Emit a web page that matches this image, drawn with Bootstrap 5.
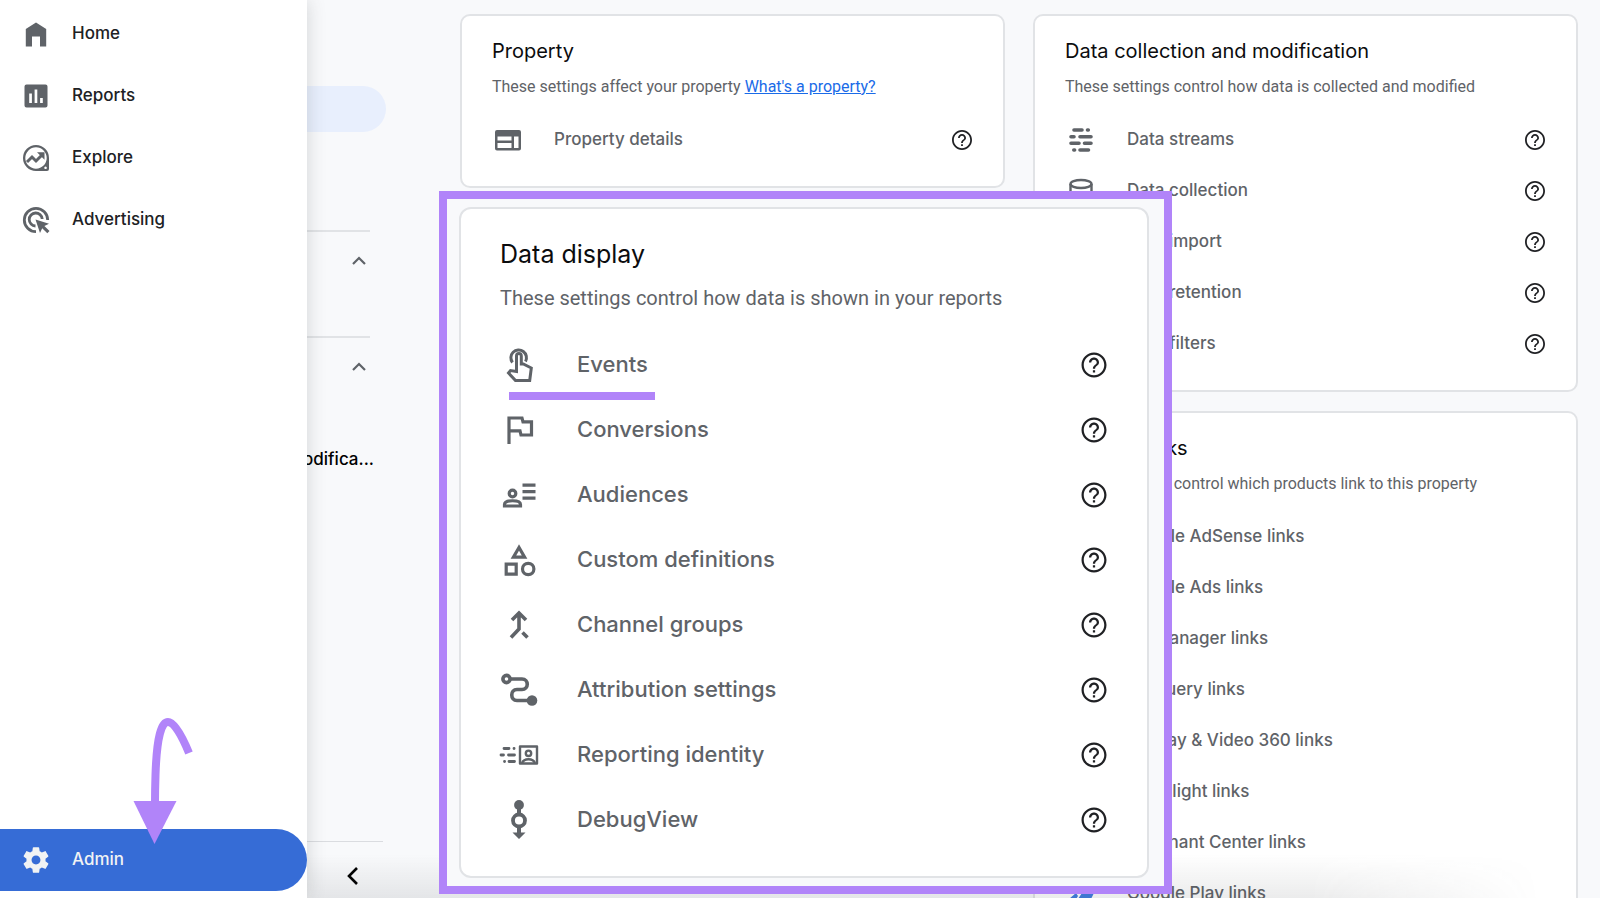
<!DOCTYPE html>
<html lang="en">
<head>
<meta charset="utf-8">
<meta name="viewport" content="width=device-width, initial-scale=1">
<title>Analytics Admin</title>
<link href="https://cdn.jsdelivr.net/npm/bootstrap@5.3.0/dist/css/bootstrap.min.css" rel="stylesheet">
<style>
  :root { --ink: #202124; --muted: #5f6368; --line: #dadce0; --accent: #b184f9; --bg: #f8f9fb; }
  body { font-family: Inter, "Liberation Sans", sans-serif; background: var(--bg); color: var(--ink); font-size: 17px; }
  a { color: inherit; text-decoration: none; }
  svg { display: block; fill: currentColor; flex: none; }
  .shell { height: 100vh; overflow: hidden; }

  .drawer { width: 307px; z-index: 3; padding: 3px 0 7px; box-shadow: 0 0 18px rgba(60,64,67,.2); }
  .drawer-item { height: 62px; padding-left: 22px; gap: 22px; font-weight: 500; font-size: 17px; }
  .drawer-item svg { width: 28px; height: 28px; color: var(--muted); }
  .drawer-item.current { background: #366cd6; color: #f1f3f4; border-radius: 0 31px 31px 0; }
  .drawer-item.current svg { color: #f1f3f4; }
  .pointer { left: 130px; bottom: 50px; z-index: 4; width: 66px; height: 132px; color: var(--accent); }

  .subnav { width: 314px; margin-left: 72px; padding-top: 86px; flex: none; }
  .subnav-pill { height: 46px; margin-bottom: 98px; background: #e8effd; border-radius: 0 23px 23px 0; }
  .subnav-group { border-top: 2px solid #e1e3e6; margin-right: 16px; height: 106px; }
  .subnav-group button, .subnav-foot button { border: 0; background: none; padding: 0; color: var(--muted); }
  .subnav-group button { margin: 17px -1px 0 auto; display: block; }
  .subnav-group.last { height: auto; }
  .subnav-link { margin: 68px -4px 0 0; text-align: right; font-weight: 500; color: #000; font-size: 17px; line-height: 24px; white-space: nowrap; }
  .subnav-foot { border-top: 1px solid var(--line); height: 57px; margin-right: 3px; padding: 19px 16px 0 0; }
  .subnav-foot button { color: #000; }

  .board { padding: 14px 22px 0 74px; }
  .board-grid { display: grid; grid-template-columns: 1fr 1fr; gap: 28px; align-items: start; }
  .stack { display: grid; gap: 19px; }
  .panel { background: #fff; border: 2px solid #e1e3e6; border-radius: 10px; padding: 21px 29px 21px 30px; }
  .panel h2 { font-size: 20px; line-height: 28px; font-weight: 400; margin: 0 0 10px; color: #0b0c0e; }
  .panel p { font-family: Roboto, sans-serif; font-size: 16px; line-height: 24px; margin: 0 0 15px; color: var(--muted); white-space: nowrap; }
  .panel p a { color: #1a6be8; text-decoration: underline; }
  .setting { height: 51px; color: var(--muted); font-weight: 500; }
  .setting a { padding-top: 1px; }
  .setting .glyph { width: 32px; display: flex; justify-content: center; margin-right: 30px; }
  .setting .glyph svg { width: 28px; height: 28px; }
  .help { border: 0; background: none; padding: 0; color: var(--ink); margin-left: auto; }
  .help svg { width: 24px; height: 24px; }

  .spotlight { left: 439px; top: 191px; width: 733px; z-index: 2; border: 8px solid var(--accent); background: var(--bg); padding: 8px 15px 8px 12px; }
  .spotlight .panel { padding: 29px 38px 24px 39px; border-radius: 12px; }
  .spotlight h2 { font-size: 25px; line-height: 32px; margin-bottom: 15px; }
  .spotlight p { font-size: 20px; line-height: 26px; margin-bottom: 21px; }
  .spotlight .setting { height: 65px; font-size: 22px; position: relative; }
  .spotlight .setting a { padding-top: 0; }
  .spotlight .setting .glyph { width: 38px; margin-right: 39px; }
  .spotlight .setting .glyph svg { width: 40px; height: 40px; }
  .spotlight .help svg { width: 30px; height: 30px; }
  .marker { position: absolute; left: 9px; bottom: -3px; width: 146px; height: 8px; background: var(--accent); }
  .haze { height: 44px; z-index: 1; left: 100px; right: 60px; pointer-events: none; background: linear-gradient(rgba(60,64,67,0), rgba(60,64,67,.1)); -webkit-mask-image: linear-gradient(90deg, transparent, #000 15%, #000 84%, transparent); mask-image: linear-gradient(90deg, transparent, #000 15%, #000 84%, transparent); }
</style>
</head>
<body>
<svg width="0" height="0" class="position-absolute" aria-hidden="true">
  <symbol id="help" viewBox="0 0 24 24"><path d="M11.100 18h1.800v-1.800h-1.800zM12 2C6.480 2 2 6.480 2 12s4.480 10 10 10 10-4.480 10-10S17.520 2 12 2zm0 18.200c-4.520 0-8.200-3.680-8.200-8.200s3.680-8.200 8.200-8.200 8.200 3.680 8.200 8.200-3.680 8.200-8.200 8.200zM12 6c-2.210 0-4 1.790-4 4h1.800c0-1.210 1-2.200 2.200-2.200s2.200 1 2.200 2.200c0 2-3.100 1.750-3.100 5h1.800c0-2.250 3.100-2.500 3.100-5 0-2.210-1.790-4-4-4z"/></symbol>
  <symbol id="up" viewBox="0 0 24 24"><path d="M6 15 12 9l6 6" fill="none" stroke="currentColor" stroke-width="2.200"/></symbol>
</svg>

<div class="shell d-flex position-relative">
  <nav class="drawer position-absolute top-0 bottom-0 start-0 bg-white d-flex flex-column" aria-label="Main">
    <a href="#" class="drawer-item d-flex align-items-center"><svg viewBox="0 0 28 28"><path d="M14 2.500 3.800 9v17.500H10V16.500h8v10h6.200V9z"/></svg>Home</a>
    <a href="#" class="drawer-item d-flex align-items-center"><svg viewBox="0 0 28 28"><path fill-rule="evenodd" d="M4.500 2.500h19a2 2 0 0 1 2 2v19a2 2 0 0 1-2 2h-19a2 2 0 0 1-2-2v-19a2 2 0 0 1 2-2zM7.200 11.500V21h2.700v-9.500zM12.600 7.500V21h2.700V7.500zM18.100 16v5h2.700v-5z"/></svg>Reports</a>
    <a href="#" class="drawer-item d-flex align-items-center"><svg viewBox="0 0 28 28"><path fill-rule="evenodd" d="M14 1a13 13 0 0 0 0 26h11q2 0 2-2V14A13 13 0 0 0 14 1zm0 2.300a10.700 10.700 0 1 1 0 21.400 10.700 10.700 0 0 1 0-21.400zM23.500 22.500a1.300 1.300 0 1 0 .1 0z"/><path d="m5 18 5-5 4 4 6-6" fill="none" stroke="currentColor" stroke-width="3"/><path d="M15 8.300h7.500v7.400z"/></svg>Explore</a>
    <a href="#" class="drawer-item d-flex align-items-center"><svg viewBox="0 0 28 28"><path d="M14 25.700A11.700 11.700 0 1 1 25.700 14M13.500 20A6.500 6.500 0 1 1 20.200 13" fill="none" stroke="currentColor" stroke-width="2.800"/><path d="m13.500 13.500 13.500 4.300-4.600 2.200 5.100 5.100-2.200 2.200-5.100-5.100-2.200 4.800z"/></svg>Advertising</a>
    <a href="#" class="drawer-item current d-flex align-items-center mt-auto" aria-current="page"><svg viewBox="1 1 22 22"><path d="M19.430 12.980c.04-.32.07-.64.07-.98s-.03-.66-.07-.98l2.110-1.650c.19-.15.24-.42.12-.64l-2-3.460c-.12-.22-.39-.3-.61-.22l-2.490 1c-.52-.4-1.080-.73-1.690-.98l-.38-2.650C14.460 2.180 14.250 2 14 2h-4c-.25 0-.46.18-.49.42l-.38 2.650c-.61.25-1.170.59-1.690.98l-2.490-1c-.23-.09-.49 0-.61.22l-2 3.460c-.13.22-.07.49.12.64l2.110 1.650c-.04.32-.07.65-.07.98s.03.66.07.98l-2.110 1.650c-.19.15-.24.42-.12.64l2 3.460c.12.22.39.3.61.22l2.490-1c.52.4 1.080.73 1.690.98l.38 2.650c.03.24.24.42.49.42h4c.25 0 .46-.18.49-.42l.38-2.650c.61-.25 1.170-.59 1.690-.98l2.490 1c.23.09.49 0 .61-.22l2-3.460c.12-.22.07-.49-.12-.64l-2.110-1.650zM12 15.500c-1.930 0-3.500-1.570-3.500-3.500s1.570-3.500 3.500-3.500 3.500 1.570 3.500 3.500-1.570 3.500-3.500 3.500z"/></svg>Admin</a>
  </nav>
  <svg class="pointer position-absolute" viewBox="130 716 66 132" aria-hidden="true"><path d="M189 753C175 719 158 697 155.500 775Q155 790 155 803" fill="none" stroke="currentColor" stroke-width="8"/><path d="M133.500 801h43L154.500 844z"/></svg>

  <aside class="subnav d-flex flex-column">
    <div class="subnav-pill"></div>
    <div class="subnav-group"><button type="button" aria-label="Collapse group"><svg width="24" height="24"><use href="#up"/></svg></button></div>
    <div class="subnav-group last"><button type="button" aria-label="Collapse group"><svg width="24" height="24"><use href="#up"/></svg></button>
      <a href="#" class="subnav-link d-block">Data collection and modifica...</a></div>
    <div class="subnav-foot mt-auto d-flex justify-content-end align-items-start"><button type="button" aria-label="Collapse menu"><svg width="28" height="28" viewBox="0 0 28 28"><path d="m18 7-8 8 8 8" fill="none" stroke="currentColor" stroke-width="2.600"/></svg></button></div>
  </aside>

  <main class="board flex-grow-1">
    <div class="board-grid">
      <section class="panel">
        <h2>Property</h2>
        <p>These settings affect your property <a href="#">What's a property?</a></p>
        <div class="setting d-flex align-items-center"><span class="glyph"><svg viewBox="0 0 28 28"><path fill-rule="evenodd" d="M3 4h22a2 2 0 0 1 2 2v16.500a2 2 0 0 1-2 2H3a2 2 0 0 1-2-2V6q0-2 2-2zm.5 6.500v4h14v-4zm0 6.500v5h14v-5zm16.500-6.500V22h4.500V10.500z"/></svg></span><a href="#">Property details</a><button type="button" class="help" aria-label="Help"><svg><use href="#help"/></svg></button></div>
      </section>
      <div class="stack">
        <section class="panel">
          <h2>Data collection and modification</h2>
          <p>These settings control how data is collected and modified</p>
          <div class="setting d-flex align-items-center"><span class="glyph"><svg viewBox="0 0 28 28"><path d="M7 4h8M20.500 4h.8M4 10.700h3M13 10.700h11M4 17.300h8M17.500 17.300H24M6.800 24h.8M13 24h8.500" fill="none" stroke="currentColor" stroke-width="3.600" stroke-linecap="round"/></svg></span><a href="#">Data streams</a><button type="button" class="help" aria-label="Help"><svg><use href="#help"/></svg></button></div>
          <div class="setting d-flex align-items-center"><span class="glyph"><svg viewBox="0 0 28 28"><g fill="none" stroke="currentColor" stroke-width="2.400"><ellipse cx="14" cy="7" rx="10.500" ry="4"/><path d="M3.500 7v14c0 5.500 21 5.500 21 0V7M3.500 14c0 5 21 5 21 0"/></g></svg></span><a href="#">Data collection</a><button type="button" class="help" aria-label="Help"><svg><use href="#help"/></svg></button></div>
          <div class="setting d-flex align-items-center"><span class="glyph"></span><a href="#">Data import</a><button type="button" class="help" aria-label="Help"><svg><use href="#help"/></svg></button></div>
          <div class="setting d-flex align-items-center"><span class="glyph"></span><a href="#">Data retention</a><button type="button" class="help" aria-label="Help"><svg><use href="#help"/></svg></button></div>
          <div class="setting d-flex align-items-center"><span class="glyph"></span><a href="#">Data filters</a><button type="button" class="help" aria-label="Help"><svg><use href="#help"/></svg></button></div>
        </section>
        <section class="panel">
          <h2>Product links</h2>
          <p>These settings control which products link to this property</p>
          <div class="setting d-flex align-items-center"><span class="glyph"></span><a href="#">Google AdSense links</a></div>
          <div class="setting d-flex align-items-center"><span class="glyph"></span><a href="#">Google Ads links</a></div>
          <div class="setting d-flex align-items-center"><span class="glyph"></span><a href="#">Ad Manager links</a></div>
          <div class="setting d-flex align-items-center"><span class="glyph"></span><a href="#">BigQuery links</a></div>
          <div class="setting d-flex align-items-center"><span class="glyph"></span><a href="#">Display &amp; Video 360 links</a></div>
          <div class="setting d-flex align-items-center"><span class="glyph"></span><a href="#">Floodlight links</a></div>
          <div class="setting d-flex align-items-center"><span class="glyph"></span><a href="#">Merchant Center links</a></div>
          <div class="setting d-flex align-items-center"><span class="glyph"><svg viewBox="0 0 28 28"><path fill="#3f7de0" d="m2 19 7-6 2 3-5 8zM11 19l4-6h12l-3 6-9 4z"/></svg></span><a href="#">Google Play links</a></div>
        </section>
      </div>
    </div>
  </main>

  <div class="spotlight position-absolute">
    <section class="panel">
      <h2>Data display</h2>
      <p>These settings control how data is shown in your reports</p>
      <div class="setting d-flex align-items-center"><span class="glyph"><svg viewBox="0 0 40 40"><g fill="none" stroke="currentColor" stroke-width="3"><path d="M13.500 17.500A7.800 7.800 0 1 1 26.500 16.500"/><path d="M17.500 26.500V11a2.400 2.400 0 0 1 4.800 0V19h2l8 4-1.600 12.500H16.500L9.500 28l2-2.500z"/></g></svg></span><a href="#">Events</a><button type="button" class="help" aria-label="Help"><svg><use href="#help"/></svg></button><span class="marker"></span></div>
      <div class="setting d-flex align-items-center"><span class="glyph"><svg viewBox="0 0 40 40"><path d="M10 34V8h13l1 3.800h8.500V25H22l-1-4.200H10" fill="none" stroke="currentColor" stroke-width="3.200"/></svg></span><a href="#">Conversions</a><button type="button" class="help" aria-label="Help"><svg><use href="#help"/></svg></button></div>
      <div class="setting d-flex align-items-center"><span class="glyph"><svg viewBox="0 0 40 40"><g fill="none" stroke="currentColor" stroke-width="3.200"><circle cx="13.500" cy="18.500" r="3.300"/><path d="M5.500 31v-1.500c0-5 16-5 16 0V31zM23.500 10.200h13M23.500 16.700h13M23.500 23.200h13"/></g></svg></span><a href="#">Audiences</a><button type="button" class="help" aria-label="Help"><svg><use href="#help"/></svg></button></div>
      <div class="setting d-flex align-items-center"><span class="glyph"><svg viewBox="0 0 40 40"><g fill="none" stroke="currentColor" stroke-width="3.200"><path d="m20 7.500-5.600 9.600h11.200zM7.200 24.200h10v10h-10z"/><circle cx="29.200" cy="29" r="5.700"/></g></svg></span><a href="#">Custom definitions</a><button type="button" class="help" aria-label="Help"><svg><use href="#help"/></svg></button></div>
      <div class="setting d-flex align-items-center"><span class="glyph"><svg viewBox="0 0 40 40"><path d="m12 32.500 8-8.500V8M13 15l7-7 7 7M23.500 27.500l5 5" fill="none" stroke="currentColor" stroke-width="3.600"/></svg></span><a href="#">Channel groups</a><button type="button" class="help" aria-label="Help"><svg><use href="#help"/></svg></button></div>
      <div class="setting d-flex align-items-center"><span class="glyph"><svg viewBox="0 0 40 40"><g fill="none" stroke="currentColor" stroke-width="3.600"><circle cx="7.500" cy="9" r="3.600"/><path d="M11 9h12c7 0 7 10.500 0 10.500h-5c-7 0-7 11 0 11h15"/></g><circle cx="33" cy="30.500" r="5.300"/></svg></span><a href="#">Attribution settings</a><button type="button" class="help" aria-label="Help"><svg><use href="#help"/></svg></button></div>
      <div class="setting d-flex align-items-center"><span class="glyph"><svg viewBox="0 0 40 40"><g fill="none" stroke="currentColor"><path d="M5 13.500h5M15 13.500h.1M2 20h2.500M9.500 20h6M5.500 26.500h.1M10 26.500h5.500" stroke-width="2.800" stroke-linecap="round"/><path d="M21 11.500h17v17H21z" stroke-width="2.400" stroke-linejoin="round"/><circle cx="29.500" cy="18.300" r="2.700" stroke-width="2.400"/><path d="M23 28c2-5 11-5 13 0" stroke-width="2.400"/></g></svg></span><a href="#">Reporting identity</a><button type="button" class="help" aria-label="Help"><svg><use href="#help"/></svg></button></div>
      <div class="setting d-flex align-items-center"><span class="glyph"><svg viewBox="0 0 40 40"><circle cx="20" cy="5" r="4.900"/><circle cx="20" cy="20.500" r="6" fill="none" stroke="currentColor" stroke-width="3.800"/><path d="M18 9h4v6h-4zM18 27h4v5.500h4.500L20 39 13.500 32.500H18z"/></svg></span><a href="#">DebugView</a><button type="button" class="help" aria-label="Help"><svg><use href="#help"/></svg></button></div>
    </section>
  </div>
  <div class="haze position-absolute bottom-0"></div>
</div>
<script src="https://cdn.jsdelivr.net/npm/bootstrap@5.3.0/dist/js/bootstrap.bundle.min.js"></script>
</body>
</html>
